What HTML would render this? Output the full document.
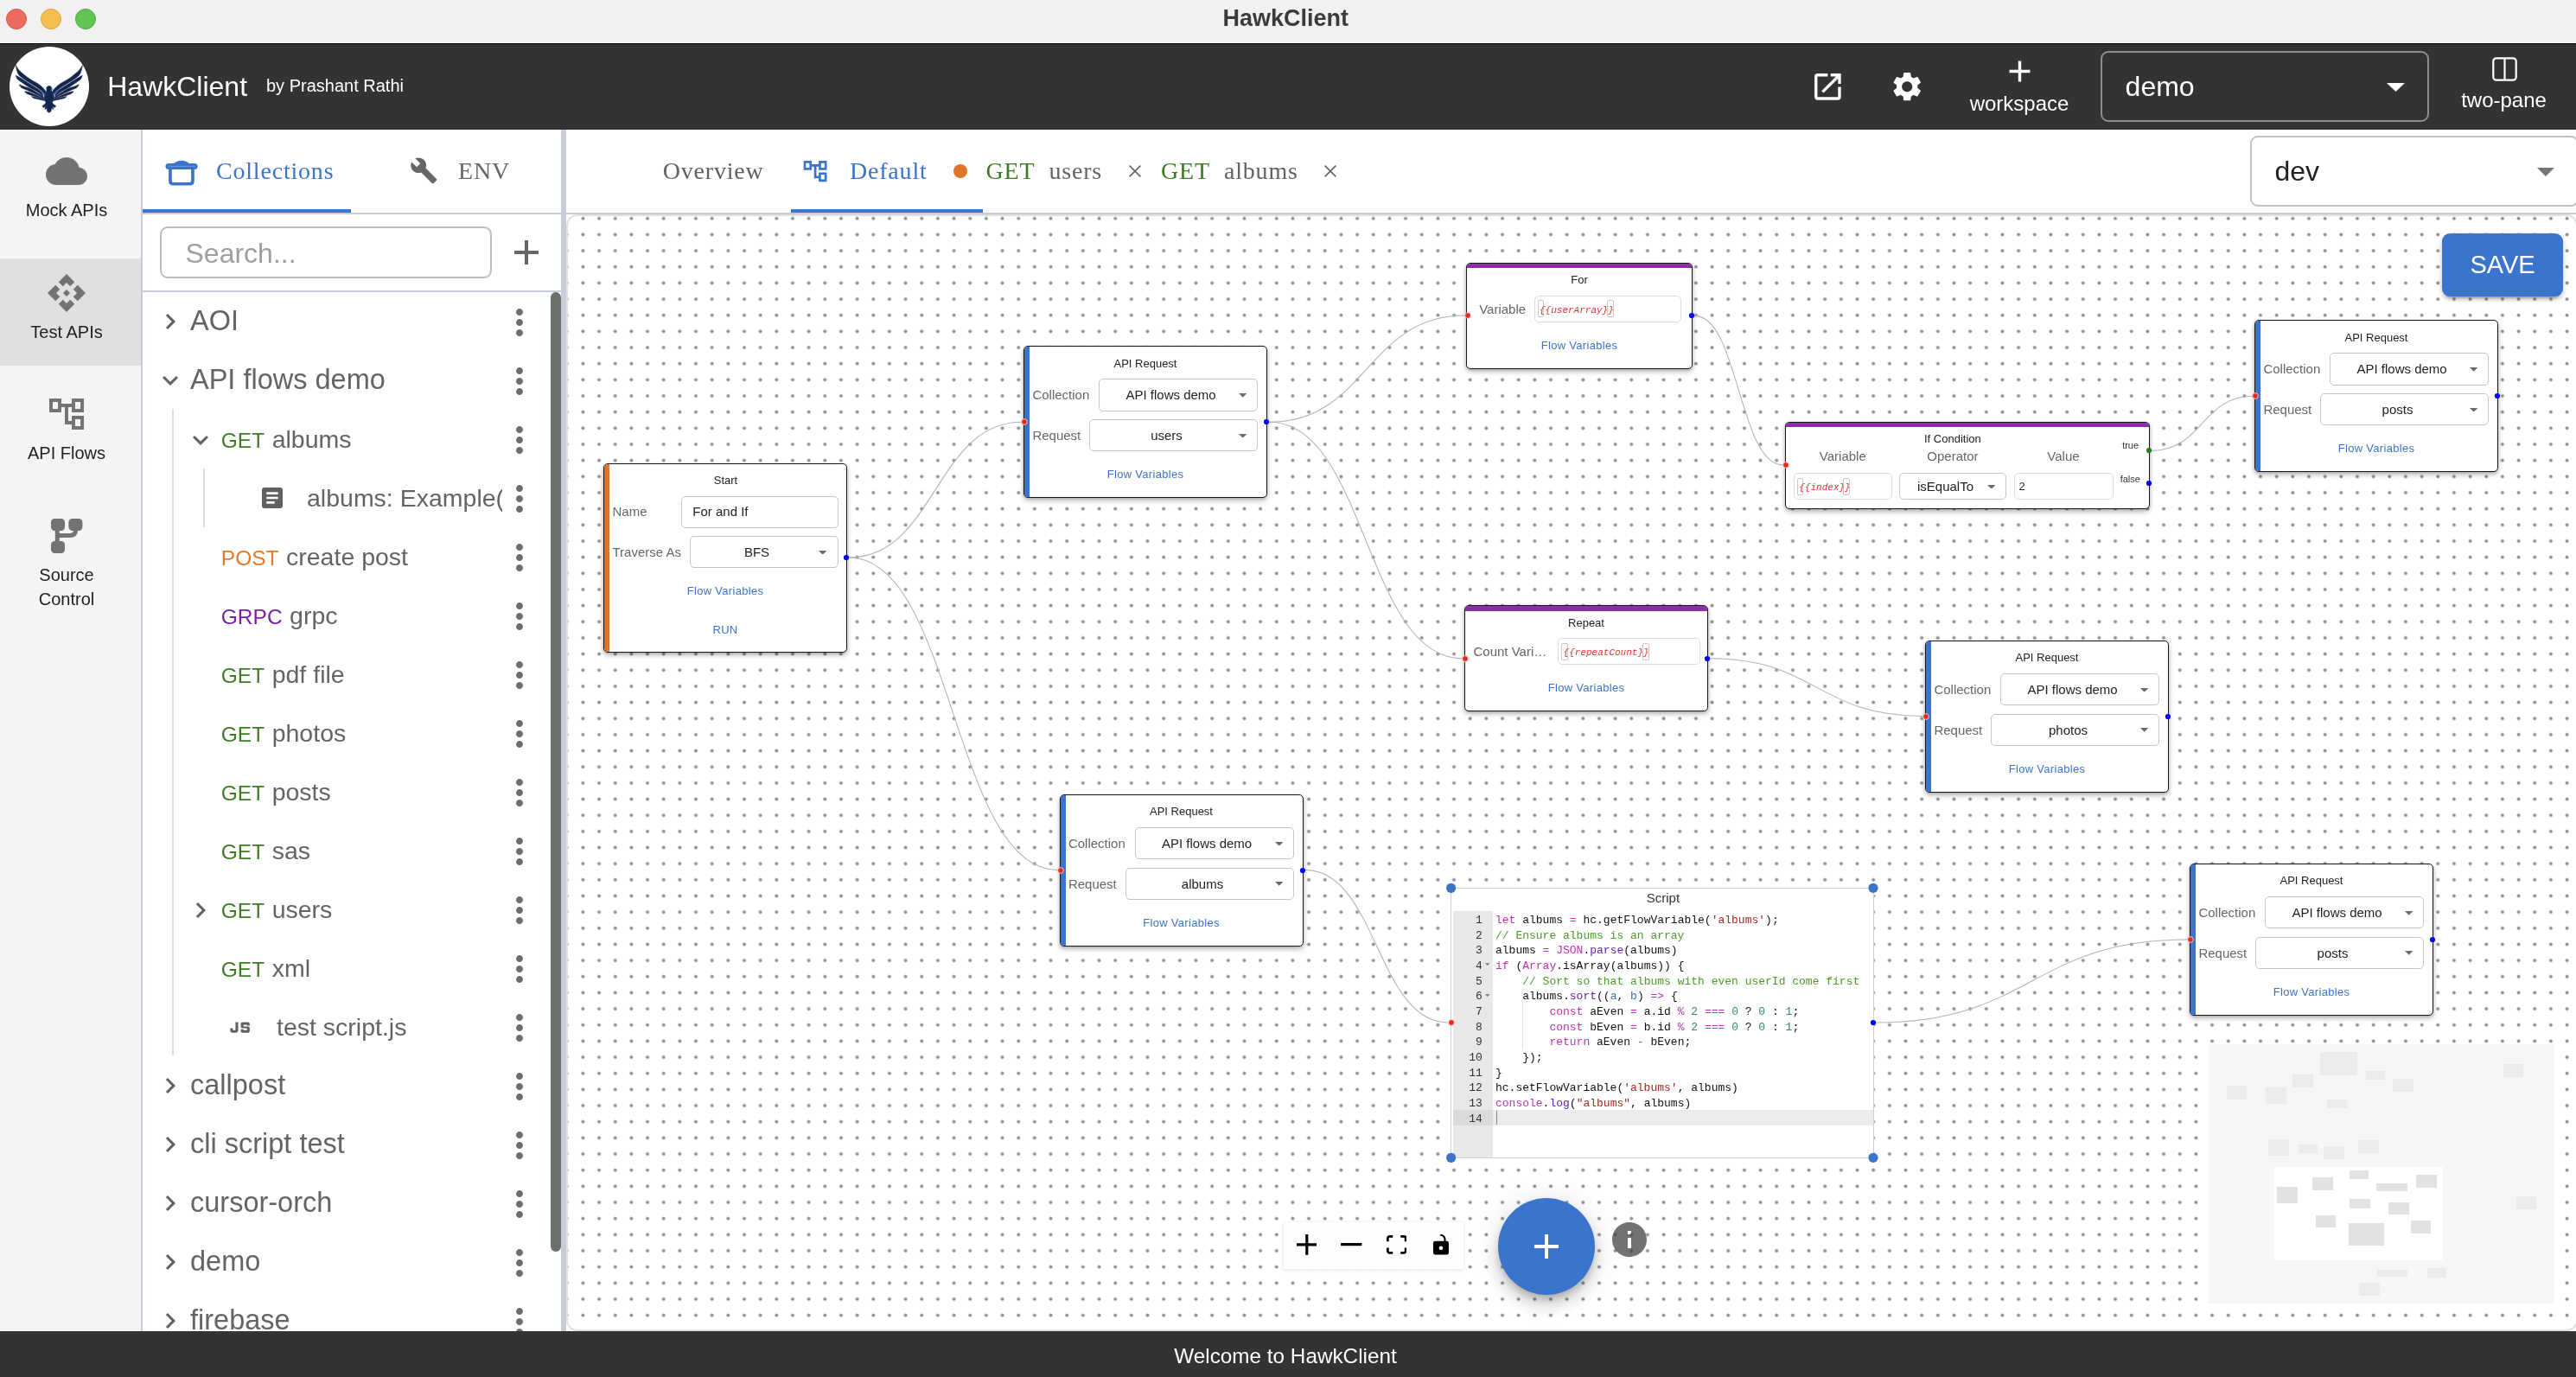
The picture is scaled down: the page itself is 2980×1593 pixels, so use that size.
<!DOCTYPE html><html><head><meta charset="utf-8"><title>HawkClient</title><style>
html,body{margin:0;padding:0;overflow:hidden}body{width:2980px;height:1593px;overflow:hidden;position:relative;background:#fff;font-family:"Liberation Sans",sans-serif;}
.n{position:absolute;box-sizing:border-box;background:#fff;border:1px solid #181818;border-radius:5px;box-shadow:0 3px 6px rgba(0,0,0,.27),0 1px 3px rgba(0,0,0,.16);overflow:hidden}
.n>*{margin-left:-1px;margin-top:-1px}
.sel{position:absolute;box-sizing:border-box;border:1px solid #c4c4c4;border-radius:5px;background:#fff}
.inp{position:absolute;box-sizing:border-box;border:1px solid #dcdcdc;border-radius:5px;background:#fff}
.h{position:absolute;width:7px;height:7px;border-radius:50%;box-sizing:border-box}
</style></head><body><div style="position:absolute;left:0;top:0;width:2980px;height:1593px;overflow:hidden;will-change:transform">
<div style="position:absolute;left:0.00px;top:0.00px;width:2980.00px;height:50.00px;box-sizing:border-box;background:#f1f1ef;border-bottom:1px solid #fff;"></div>
<div style="position:absolute;left:7.00px;top:9.70px;width:24.00px;height:24.00px;box-sizing:border-box;border-radius:50%;background:#ec6a5e;border:1px solid #d5524a;"></div>
<div style="position:absolute;left:47.00px;top:9.70px;width:24.00px;height:24.00px;box-sizing:border-box;border-radius:50%;background:#f4bf4f;border:1px solid #d9a13a;"></div>
<div style="position:absolute;left:87.00px;top:9.70px;width:24.00px;height:24.00px;box-sizing:border-box;border-radius:50%;background:#61c554;border:1px solid #4ca63f;"></div>
<div style="position:absolute;top:8.34px;font-size:27px;line-height:27px;color:#3b3b3b;white-space:nowrap;left:1487.20px;transform:translateX(-50%);font-weight:bold;">HawkClient</div>
<div style="position:absolute;left:0.00px;top:50.00px;width:2980.00px;height:100.00px;box-sizing:border-box;background:#333;border-top:1px solid #000;"></div>
<div style="position:absolute;left:11.20px;top:53.80px;width:92.00px;height:92.00px;box-sizing:border-box;border-radius:50%;background:#fff;"></div>
<svg style="position:absolute;left:11.2px;top:53.8px" width="92" height="92" viewBox="0 0 92 92">
<defs><g id="hw"><path d="M7.30 21.60C8.08 22.70 9.40 25.65 12.00 28.20C14.60 30.75 19.27 34.37 22.90 36.90C26.53 39.43 31.12 41.55 33.80 43.40C36.48 45.25 37.53 46.47 39.00 48.00C40.47 49.53 42.00 51.83 42.60 52.60L39.40 54.80C38.47 53.75 36.55 50.70 33.80 48.50C31.05 46.30 26.53 44.02 22.90 41.60C19.27 39.18 14.38 36.27 12.00 34.00C9.62 31.73 9.38 30.07 8.60 28.00C7.82 25.93 7.52 22.67 7.30 21.60Z"/><path d="M7.30 33.30C8.08 33.72 9.40 34.23 12.00 35.80C14.60 37.37 19.27 40.40 22.90 42.70C26.53 45.00 31.13 47.45 33.80 49.60C36.47 51.75 38.05 54.60 38.90 55.60L38.60 57.60C37.80 56.87 36.42 54.95 33.80 53.20C31.18 51.45 26.53 49.33 22.90 47.10C19.27 44.87 14.35 41.48 12.00 39.80C9.65 38.12 9.58 38.08 8.80 37.00C8.02 35.92 7.55 33.92 7.30 33.30Z"/><path d="M11.30 43.80C12.08 44.13 14.07 45.08 16.00 45.80C17.93 46.52 19.93 46.68 22.90 48.10C25.87 49.52 31.05 52.60 33.80 54.30C36.55 56.00 38.47 57.63 39.40 58.30L39.30 59.70C38.38 59.17 36.53 57.88 33.80 56.50C31.07 55.12 26.20 52.90 22.90 51.40C19.60 49.90 15.93 48.77 14.00 47.50C12.07 46.23 11.75 44.42 11.30 43.80Z"/><path d="M17.40 51.80C18.32 51.95 20.17 51.80 22.90 52.70C25.63 53.60 30.95 55.97 33.80 57.20C36.65 58.43 38.97 59.62 40.00 60.10L39.90 61.10C38.88 60.73 36.63 59.85 33.80 58.90C30.97 57.95 25.20 56.17 22.90 55.40C20.60 54.63 20.92 54.90 20.00 54.30C19.08 53.70 17.83 52.22 17.40 51.80Z"/><path d="M25.40 57.60C26.00 57.70 27.60 57.88 29.00 58.20C30.40 58.52 31.90 58.95 33.80 59.50C35.70 60.05 39.30 61.17 40.40 61.50L40.30 62.40C39.22 62.15 35.77 61.33 33.80 60.90C31.83 60.47 29.90 60.35 28.50 59.80C27.10 59.25 25.92 57.97 25.40 57.60Z"/></g></defs>
<g fill="#15264d" stroke="#15264d" stroke-width="0.55" stroke-linejoin="round"><use href="#hw"/><use href="#hw" transform="translate(91.6,0) scale(-1,1)"/>
<path d="M45.8 45.4 C43.6 45.4 42.6 47 42.9 49.2 C43.1 51 42.8 52 42 53 L40.2 55 L40.2 61 L42.1 64.6 L41 66.4 L37.8 68.7 L39.5 70.6 L41.8 68.8 L40.8 72.6 L43.1 71.3 L43.7 75 L45.8 76.3 L47.9 75 L48.5 71.3 L50.8 72.6 L49.8 68.8 L52.1 70.6 L53.8 68.7 L50.6 66.4 L49.5 64.6 L51.4 61 L51.4 55 L49.6 53 C48.8 52 48.5 51 48.7 49.2 C49 47 48 45.4 45.8 45.4Z"/></g>
<path d="M48.3 47.3 L50.7 49.6 L48.6 49.9Z" fill="#3f8fe0"/>
<path d="M36.2 49.8 L42 56.4 M55.4 49.8 L49.6 56.4" stroke="#2f6fc0" stroke-width="1" fill="none"/>
</svg>
<div style="position:absolute;top:83.91px;font-size:32px;line-height:32px;color:#fff;white-space:nowrap;left:124.20px;">HawkClient</div>
<div style="position:absolute;top:89.07px;font-size:20px;line-height:20px;color:#fff;white-space:nowrap;left:308.00px;">by Prashant Rathi</div>
<svg style="position:absolute;left:2093.60px;top:79.60px;" width="40.8" height="40.8" viewBox="0 0 24 24"><path fill="#fff" d="M19 19H5V5h7V3H5c-1.11 0-2 .9-2 2v14c0 1.1.89 2 2 2h14c1.1 0 2-.9 2-2v-7h-2v7zM14 3v2h3.59l-9.83 9.83 1.41 1.41L19 6.41V10h2V3h-7z"/></svg>
<svg style="position:absolute;left:2185.80px;top:79.50px;" width="40.4" height="40.4" viewBox="0 0 24 24"><path fill="#fff" d="M19.14 12.94c.04-.3.06-.61.06-.94 0-.32-.02-.64-.07-.94l2.03-1.58c.18-.14.23-.41.12-.61l-1.92-3.32c-.12-.22-.37-.29-.59-.22l-2.39.96c-.5-.38-1.03-.7-1.62-.94l-.36-2.54c-.04-.24-.24-.41-.48-.41h-3.84c-.24 0-.43.17-.47.41l-.36 2.54c-.59.24-1.13.57-1.62.94l-2.39-.96c-.22-.08-.47 0-.59.22L2.74 8.87c-.12.21-.08.47.12.61l2.03 1.58c-.05.3-.09.63-.09.94s.02.64.07.94l-2.03 1.58c-.18.14-.23.41-.12.61l1.92 3.32c.12.22.37.29.59.22l2.39-.96c.5.38 1.03.7 1.62.94l.36 2.54c.05.24.24.41.48.41h3.84c.24 0 .44-.17.47-.41l.36-2.54c.59-.24 1.13-.56 1.62-.94l2.39.96c.22.08.47 0 .59-.22l1.92-3.32c.12-.22.07-.47-.12-.61l-2.01-1.58zM12 15.6c-1.98 0-3.6-1.62-3.6-3.6s1.62-3.6 3.6-3.6 3.6 1.62 3.6 3.6-1.62 3.6-3.6 3.6z"/></svg>
<svg style="position:absolute;left:2315.50px;top:61.50px;" width="41" height="41" viewBox="0 0 24 24"><path fill="#fff" d="M19 13h-6v6h-2v-6H5v-2h6V5h2v6h6v2z"/></svg>
<div style="position:absolute;top:107.88px;font-size:24px;line-height:24px;color:#fff;white-space:nowrap;left:2336.00px;transform:translateX(-50%);">workspace</div>
<div style="position:absolute;left:2430.00px;top:59.00px;width:380.00px;height:81.50px;box-sizing:border-box;border:2px solid #8e8e8e;border-radius:9px;"></div>
<div style="position:absolute;top:84.41px;font-size:32px;line-height:32px;color:#fff;white-space:nowrap;left:2458.60px;">demo</div>
<svg style="position:absolute;left:2761px;top:96px" width="21" height="10" viewBox="0 0 21 10"><path d="M0 0H21L10.5 10Z" fill="#fff"/></svg>
<svg style="position:absolute;left:2882.6px;top:66px" width="29" height="28" viewBox="0 0 29 28"><rect x="1.3" y="1.3" width="26.4" height="25.4" rx="3.6" fill="none" stroke="#fff" stroke-width="2.2"/><path d="M14.5 1.5V26.5" stroke="#fff" stroke-width="2.2"/></svg>
<div style="position:absolute;top:103.68px;font-size:24px;line-height:24px;color:#fff;white-space:nowrap;left:2896.50px;transform:translateX(-50%);">two-pane</div>
<div style="position:absolute;left:0.00px;top:150.00px;width:163.00px;height:1390.00px;box-sizing:border-box;background:#f4f4f4;"></div>
<div style="position:absolute;left:163.00px;top:150.00px;width:2.00px;height:1390.00px;box-sizing:border-box;background:#c5cbd9;"></div>
<div style="position:absolute;left:0.00px;top:299.30px;width:163.00px;height:123.60px;box-sizing:border-box;background:#e0e0e0;"></div>
<svg style="position:absolute;left:53.00px;top:174.00px;" width="48" height="48" viewBox="0 0 24 24"><path fill="#737373" d="M19.35 10.04C18.67 6.59 15.64 4 12 4 9.11 4 6.6 5.64 5.35 8.04 2.34 8.36 0 10.91 0 14c0 3.31 2.69 6 6 6h13c2.76 0 5-2.24 5-5 0-2.64-2.05-4.78-4.65-4.96z"/></svg>
<div style="position:absolute;top:232.87px;font-size:20px;line-height:20px;color:#222;white-space:nowrap;left:77.00px;transform:translateX(-50%);">Mock APIs</div>
<svg style="position:absolute;left:53.00px;top:315.00px;" width="48" height="48" viewBox="0 0 24 24"><path fill="#737373" d="M14 12l-2 2-2-2 2-2 2 2zm-2-6l2.12 2.12 2.5-2.5L12 1 7.38 5.62l2.5 2.5L12 6zm-6 6l2.12-2.12-2.5-2.5L1 12l4.62 4.62 2.5-2.5L6 12zm12 0l-2.12 2.12 2.5 2.5L23 12l-4.62-4.62-2.5 2.5L18 12zm-6 6l-2.12-2.12-2.5 2.5L12 23l4.62-4.62-2.5-2.5L12 18z"/></svg>
<div style="position:absolute;top:373.87px;font-size:20px;line-height:20px;color:#222;white-space:nowrap;left:77.00px;transform:translateX(-50%);">Test APIs</div>
<svg style="position:absolute;left:52.60px;top:455.00px;" width="48" height="48" viewBox="0 0 24 24"><path fill="#737373" d="M22 11V3h-7v3H9V3H2v8h7V8h2v10h4v3h7v-8h-7v3h-2V8h2v3h7zM7 9H4V5h3v4zm10 6h3v4h-3v-4zm0-10h3v4h-3V5z"/></svg>
<div style="position:absolute;top:513.87px;font-size:20px;line-height:20px;color:#222;white-space:nowrap;left:77.00px;transform:translateX(-50%);">API Flows</div>
<svg style="position:absolute;left:53px;top:597px" width="48" height="48" viewBox="0 0 48 48">
<g fill="#737373"><rect x="6" y="3" width="16" height="14" rx="4.2"/><rect x="26.4" y="3" width="16" height="14" rx="4.2"/><rect x="6" y="29" width="16" height="14" rx="4.2"/></g>
<path d="M13.25 16V30M13.25 22.5H27.5Q34.5 22.5 34.5 16" fill="none" stroke="#737373" stroke-width="5"/></svg>
<div style="position:absolute;top:655.27px;font-size:20px;line-height:20px;color:#222;white-space:nowrap;left:77.00px;transform:translateX(-50%);">Source</div>
<div style="position:absolute;top:682.97px;font-size:20px;line-height:20px;color:#222;white-space:nowrap;left:77.00px;transform:translateX(-50%);">Control</div>
<div style="position:absolute;left:165.00px;top:246.00px;width:484.00px;height:2.00px;box-sizing:border-box;background:#c5cbd9;"></div>
<div style="position:absolute;left:165.00px;top:242.00px;width:241.00px;height:4.00px;box-sizing:border-box;background:#3b74cc;"></div>
<svg style="position:absolute;left:190px;top:184px" width="40" height="34" viewBox="0 0 40 34">
<rect x="1.5" y="4.9" width="37.1" height="7.2" rx="3.6" fill="#3b74cc"/>
<path d="M11 5.5 C15 0.6 25 0.6 29 5.5Z" fill="#3b74cc"/>
<path d="M6.95 11 V25.25 Q6.95 28.75 10.45 28.75 H29.45 Q32.95 28.75 32.95 25.25 V11" fill="none" stroke="#3b74cc" stroke-width="3.7"/>
<path d="M4.5 8.4H35.5" stroke="#7fa6e2" stroke-width="0.6"/></svg>
<div style="position:absolute;top:183.55px;font-size:28px;line-height:28px;color:#3b74cc;white-space:nowrap;font-family:'Liberation Serif',serif;left:250.00px;letter-spacing:0.8px;">Collections</div>
<svg style="position:absolute;left:473.80px;top:181.40px;" width="32.7" height="32.7" viewBox="0 0 24 24"><path fill="#666" d="M22.7 19l-9.1-9.1c.9-2.3.4-5-1.5-6.9-2-2-5-2.4-7.4-1.3L9 6 6 9 1.6 4.7C.4 7.1.9 10.1 2.9 12.1c1.9 1.9 4.6 2.4 6.9 1.5l9.1 9.1c.4.4 1 .4 1.4 0l2.3-2.3c.5-.4.5-1.1.1-1.4z"/></svg>
<div style="position:absolute;top:183.55px;font-size:28px;line-height:28px;color:#666;white-space:nowrap;font-family:'Liberation Serif',serif;left:530.00px;letter-spacing:0.8px;">ENV</div>
<div style="position:absolute;left:185.00px;top:262.40px;width:384.00px;height:59.20px;box-sizing:border-box;border:2px solid #bdbdbd;border-radius:9px;"></div>
<div style="position:absolute;top:276.61px;font-size:32px;line-height:32px;color:#9e9e9e;white-space:nowrap;left:214.50px;">Search...</div>
<svg style="position:absolute;left:585.00px;top:268.00px;" width="48" height="48" viewBox="0 0 24 24"><path fill="#666" d="M19 13h-6v6h-2v-6H5v-2h6V5h2v6h6v2z"/></svg>
<div style="position:absolute;left:165.00px;top:336.00px;width:484.00px;height:2.00px;box-sizing:border-box;background:#c5cbd9;"></div>
<div style="position:absolute;left:165px;top:338px;width:484px;height:1202px;overflow:hidden">
<svg style="position:absolute;left:13.50px;top:15.60px;" width="36" height="36" viewBox="0 0 24 24"><path fill="#616161" d="M10 6L8.59 7.41 13.17 12l-4.58 4.59L10 18l6-6z"/></svg>
<div style="position:absolute;top:17.09px;font-size:32.5px;line-height:32.5px;color:#646464;white-space:nowrap;left:55.00px;">AOI</div>
<svg style="position:absolute;left:412.30px;top:11.00px;" width="48" height="48" viewBox="0 0 24 24"><path fill="#6e6e6e" d="M12 8c1.1 0 2-.9 2-2s-.9-2-2-2-2 .9-2 2 .9 2 2 2zm0 2c-1.1 0-2 .9-2 2s.9 2 2 2 2-.9 2-2-.9-2-2-2zm0 6c-1.1 0-2 .9-2 2s.9 2 2 2 2-.9 2-2-.9-2-2-2z"/></svg>
<svg style="position:absolute;left:13.50px;top:83.60px;" width="36" height="36" viewBox="0 0 24 24"><path fill="#616161" d="M16.59 8.59L12 13.17 7.41 8.59 6 10l6 6 6-6z"/></svg>
<div style="position:absolute;top:85.09px;font-size:32.5px;line-height:32.5px;color:#646464;white-space:nowrap;left:55.00px;">API flows demo</div>
<svg style="position:absolute;left:412.30px;top:79.00px;" width="48" height="48" viewBox="0 0 24 24"><path fill="#6e6e6e" d="M12 8c1.1 0 2-.9 2-2s-.9-2-2-2-2 .9-2 2 .9 2 2 2zm0 2c-1.1 0-2 .9-2 2s.9 2 2 2 2-.9 2-2-.9-2-2-2zm0 6c-1.1 0-2 .9-2 2s.9 2 2 2 2-.9 2-2-.9-2-2-2z"/></svg>
<svg style="position:absolute;left:49.00px;top:153.00px;" width="36" height="36" viewBox="0 0 24 24"><path fill="#616161" d="M16.59 8.59L12 13.17 7.41 8.59 6 10l6 6 6-6z"/></svg>
<div style="position:absolute;top:155.87px;font-size:28.5px;line-height:28.5px;color:#646464;white-space:nowrap;left:90.80px;"><span style="font-size:24.5px;color:#3b7d23">GET</span><span style="margin-left:8.5px">albums</span></div>
<svg style="position:absolute;left:412.30px;top:147.00px;" width="48" height="48" viewBox="0 0 24 24"><path fill="#6e6e6e" d="M12 8c1.1 0 2-.9 2-2s-.9-2-2-2-2 .9-2 2 .9 2 2 2zm0 2c-1.1 0-2 .9-2 2s.9 2 2 2 2-.9 2-2-.9-2-2-2zm0 6c-1.1 0-2 .9-2 2s.9 2 2 2 2-.9 2-2-.9-2-2-2z"/></svg>
<svg style="position:absolute;left:134.00px;top:222.00px;" width="32" height="32" viewBox="0 0 24 24"><path fill="#616161" d="M19 3H5c-1.1 0-2 .9-2 2v14c0 1.1.9 2 2 2h14c1.1 0 2-.9 2-2V5c0-1.1-.9-2-2-2zm-5 14H7v-2h7v2zm3-4H7v-2h10v2zm0-4H7V7h10v2z"/></svg>
<div style="position:absolute;left:190px;top:223.87px;width:225.6px;overflow:hidden;font-size:28.5px;line-height:28.5px;height:35px;color:#646464;white-space:nowrap">albums: Example(</div>
<svg style="position:absolute;left:412.30px;top:215.00px;" width="48" height="48" viewBox="0 0 24 24"><path fill="#6e6e6e" d="M12 8c1.1 0 2-.9 2-2s-.9-2-2-2-2 .9-2 2 .9 2 2 2zm0 2c-1.1 0-2 .9-2 2s.9 2 2 2 2-.9 2-2-.9-2-2-2zm0 6c-1.1 0-2 .9-2 2s.9 2 2 2 2-.9 2-2-.9-2-2-2z"/></svg>
<div style="position:absolute;top:291.87px;font-size:28.5px;line-height:28.5px;color:#646464;white-space:nowrap;left:90.80px;"><span style="font-size:24.5px;color:#e07b2d">POST</span><span style="margin-left:8.5px">create post</span></div>
<svg style="position:absolute;left:412.30px;top:283.00px;" width="48" height="48" viewBox="0 0 24 24"><path fill="#6e6e6e" d="M12 8c1.1 0 2-.9 2-2s-.9-2-2-2-2 .9-2 2 .9 2 2 2zm0 2c-1.1 0-2 .9-2 2s.9 2 2 2 2-.9 2-2-.9-2-2-2zm0 6c-1.1 0-2 .9-2 2s.9 2 2 2 2-.9 2-2-.9-2-2-2z"/></svg>
<div style="position:absolute;top:359.87px;font-size:28.5px;line-height:28.5px;color:#646464;white-space:nowrap;left:90.80px;"><span style="font-size:24.5px;color:#7b1fa2">GRPC</span><span style="margin-left:8.5px">grpc</span></div>
<svg style="position:absolute;left:412.30px;top:351.00px;" width="48" height="48" viewBox="0 0 24 24"><path fill="#6e6e6e" d="M12 8c1.1 0 2-.9 2-2s-.9-2-2-2-2 .9-2 2 .9 2 2 2zm0 2c-1.1 0-2 .9-2 2s.9 2 2 2 2-.9 2-2-.9-2-2-2zm0 6c-1.1 0-2 .9-2 2s.9 2 2 2 2-.9 2-2-.9-2-2-2z"/></svg>
<div style="position:absolute;top:427.87px;font-size:28.5px;line-height:28.5px;color:#646464;white-space:nowrap;left:90.80px;"><span style="font-size:24.5px;color:#3b7d23">GET</span><span style="margin-left:8.5px">pdf file</span></div>
<svg style="position:absolute;left:412.30px;top:419.00px;" width="48" height="48" viewBox="0 0 24 24"><path fill="#6e6e6e" d="M12 8c1.1 0 2-.9 2-2s-.9-2-2-2-2 .9-2 2 .9 2 2 2zm0 2c-1.1 0-2 .9-2 2s.9 2 2 2 2-.9 2-2-.9-2-2-2zm0 6c-1.1 0-2 .9-2 2s.9 2 2 2 2-.9 2-2-.9-2-2-2z"/></svg>
<div style="position:absolute;top:495.87px;font-size:28.5px;line-height:28.5px;color:#646464;white-space:nowrap;left:90.80px;"><span style="font-size:24.5px;color:#3b7d23">GET</span><span style="margin-left:8.5px">photos</span></div>
<svg style="position:absolute;left:412.30px;top:487.00px;" width="48" height="48" viewBox="0 0 24 24"><path fill="#6e6e6e" d="M12 8c1.1 0 2-.9 2-2s-.9-2-2-2-2 .9-2 2 .9 2 2 2zm0 2c-1.1 0-2 .9-2 2s.9 2 2 2 2-.9 2-2-.9-2-2-2zm0 6c-1.1 0-2 .9-2 2s.9 2 2 2 2-.9 2-2-.9-2-2-2z"/></svg>
<div style="position:absolute;top:563.87px;font-size:28.5px;line-height:28.5px;color:#646464;white-space:nowrap;left:90.80px;"><span style="font-size:24.5px;color:#3b7d23">GET</span><span style="margin-left:8.5px">posts</span></div>
<svg style="position:absolute;left:412.30px;top:555.00px;" width="48" height="48" viewBox="0 0 24 24"><path fill="#6e6e6e" d="M12 8c1.1 0 2-.9 2-2s-.9-2-2-2-2 .9-2 2 .9 2 2 2zm0 2c-1.1 0-2 .9-2 2s.9 2 2 2 2-.9 2-2-.9-2-2-2zm0 6c-1.1 0-2 .9-2 2s.9 2 2 2 2-.9 2-2-.9-2-2-2z"/></svg>
<div style="position:absolute;top:631.87px;font-size:28.5px;line-height:28.5px;color:#646464;white-space:nowrap;left:90.80px;"><span style="font-size:24.5px;color:#3b7d23">GET</span><span style="margin-left:8.5px">sas</span></div>
<svg style="position:absolute;left:412.30px;top:623.00px;" width="48" height="48" viewBox="0 0 24 24"><path fill="#6e6e6e" d="M12 8c1.1 0 2-.9 2-2s-.9-2-2-2-2 .9-2 2 .9 2 2 2zm0 2c-1.1 0-2 .9-2 2s.9 2 2 2 2-.9 2-2-.9-2-2-2zm0 6c-1.1 0-2 .9-2 2s.9 2 2 2 2-.9 2-2-.9-2-2-2z"/></svg>
<svg style="position:absolute;left:49.00px;top:697.00px;" width="36" height="36" viewBox="0 0 24 24"><path fill="#616161" d="M10 6L8.59 7.41 13.17 12l-4.58 4.59L10 18l6-6z"/></svg>
<div style="position:absolute;top:699.87px;font-size:28.5px;line-height:28.5px;color:#646464;white-space:nowrap;left:90.80px;"><span style="font-size:24.5px;color:#3b7d23">GET</span><span style="margin-left:8.5px">users</span></div>
<svg style="position:absolute;left:412.30px;top:691.00px;" width="48" height="48" viewBox="0 0 24 24"><path fill="#6e6e6e" d="M12 8c1.1 0 2-.9 2-2s-.9-2-2-2-2 .9-2 2 .9 2 2 2zm0 2c-1.1 0-2 .9-2 2s.9 2 2 2 2-.9 2-2-.9-2-2-2zm0 6c-1.1 0-2 .9-2 2s.9 2 2 2 2-.9 2-2-.9-2-2-2z"/></svg>
<div style="position:absolute;top:767.87px;font-size:28.5px;line-height:28.5px;color:#646464;white-space:nowrap;left:90.80px;"><span style="font-size:24.5px;color:#3b7d23">GET</span><span style="margin-left:8.5px">xml</span></div>
<svg style="position:absolute;left:412.30px;top:759.00px;" width="48" height="48" viewBox="0 0 24 24"><path fill="#6e6e6e" d="M12 8c1.1 0 2-.9 2-2s-.9-2-2-2-2 .9-2 2 .9 2 2 2zm0 2c-1.1 0-2 .9-2 2s.9 2 2 2 2-.9 2-2-.9-2-2-2zm0 6c-1.1 0-2 .9-2 2s.9 2 2 2 2-.9 2-2-.9-2-2-2z"/></svg>
<svg style="position:absolute;left:89.40px;top:826.40px;" width="49.2" height="49.2" viewBox="0 0 24 24"><path fill="#616161" d="M12 14v-1h1.5v.5h2v-1H13c-.55 0-1-.45-1-1V10c0-.55.45-1 1-1h3c.55 0 1 .45 1 1v1h-1.5v-.5h-2v1H16c.55 0 1 .45 1 1V14c0 .55-.45 1-1 1h-3c-.55 0-1-.45-1-1zM9 9v4.5H7.5v-1H6v1c0 .83.67 1.5 1.5 1.5H9c.83 0 1.5-.67 1.5-1.5V9H9z"/></svg>
<div style="position:absolute;top:835.87px;font-size:28.5px;line-height:28.5px;color:#646464;white-space:nowrap;left:155.00px;">test script.js</div>
<svg style="position:absolute;left:412.30px;top:827.00px;" width="48" height="48" viewBox="0 0 24 24"><path fill="#6e6e6e" d="M12 8c1.1 0 2-.9 2-2s-.9-2-2-2-2 .9-2 2 .9 2 2 2zm0 2c-1.1 0-2 .9-2 2s.9 2 2 2 2-.9 2-2-.9-2-2-2zm0 6c-1.1 0-2 .9-2 2s.9 2 2 2 2-.9 2-2-.9-2-2-2z"/></svg>
<svg style="position:absolute;left:13.50px;top:899.60px;" width="36" height="36" viewBox="0 0 24 24"><path fill="#616161" d="M10 6L8.59 7.41 13.17 12l-4.58 4.59L10 18l6-6z"/></svg>
<div style="position:absolute;top:901.09px;font-size:32.5px;line-height:32.5px;color:#646464;white-space:nowrap;left:55.00px;">callpost</div>
<svg style="position:absolute;left:412.30px;top:895.00px;" width="48" height="48" viewBox="0 0 24 24"><path fill="#6e6e6e" d="M12 8c1.1 0 2-.9 2-2s-.9-2-2-2-2 .9-2 2 .9 2 2 2zm0 2c-1.1 0-2 .9-2 2s.9 2 2 2 2-.9 2-2-.9-2-2-2zm0 6c-1.1 0-2 .9-2 2s.9 2 2 2 2-.9 2-2-.9-2-2-2z"/></svg>
<svg style="position:absolute;left:13.50px;top:967.60px;" width="36" height="36" viewBox="0 0 24 24"><path fill="#616161" d="M10 6L8.59 7.41 13.17 12l-4.58 4.59L10 18l6-6z"/></svg>
<div style="position:absolute;top:969.09px;font-size:32.5px;line-height:32.5px;color:#646464;white-space:nowrap;left:55.00px;">cli script test</div>
<svg style="position:absolute;left:412.30px;top:963.00px;" width="48" height="48" viewBox="0 0 24 24"><path fill="#6e6e6e" d="M12 8c1.1 0 2-.9 2-2s-.9-2-2-2-2 .9-2 2 .9 2 2 2zm0 2c-1.1 0-2 .9-2 2s.9 2 2 2 2-.9 2-2-.9-2-2-2zm0 6c-1.1 0-2 .9-2 2s.9 2 2 2 2-.9 2-2-.9-2-2-2z"/></svg>
<svg style="position:absolute;left:13.50px;top:1035.60px;" width="36" height="36" viewBox="0 0 24 24"><path fill="#616161" d="M10 6L8.59 7.41 13.17 12l-4.58 4.59L10 18l6-6z"/></svg>
<div style="position:absolute;top:1037.09px;font-size:32.5px;line-height:32.5px;color:#646464;white-space:nowrap;left:55.00px;">cursor-orch</div>
<svg style="position:absolute;left:412.30px;top:1031.00px;" width="48" height="48" viewBox="0 0 24 24"><path fill="#6e6e6e" d="M12 8c1.1 0 2-.9 2-2s-.9-2-2-2-2 .9-2 2 .9 2 2 2zm0 2c-1.1 0-2 .9-2 2s.9 2 2 2 2-.9 2-2-.9-2-2-2zm0 6c-1.1 0-2 .9-2 2s.9 2 2 2 2-.9 2-2-.9-2-2-2z"/></svg>
<svg style="position:absolute;left:13.50px;top:1103.60px;" width="36" height="36" viewBox="0 0 24 24"><path fill="#616161" d="M10 6L8.59 7.41 13.17 12l-4.58 4.59L10 18l6-6z"/></svg>
<div style="position:absolute;top:1105.09px;font-size:32.5px;line-height:32.5px;color:#646464;white-space:nowrap;left:55.00px;">demo</div>
<svg style="position:absolute;left:412.30px;top:1099.00px;" width="48" height="48" viewBox="0 0 24 24"><path fill="#6e6e6e" d="M12 8c1.1 0 2-.9 2-2s-.9-2-2-2-2 .9-2 2 .9 2 2 2zm0 2c-1.1 0-2 .9-2 2s.9 2 2 2 2-.9 2-2-.9-2-2-2zm0 6c-1.1 0-2 .9-2 2s.9 2 2 2 2-.9 2-2-.9-2-2-2z"/></svg>
<svg style="position:absolute;left:13.50px;top:1171.60px;" width="36" height="36" viewBox="0 0 24 24"><path fill="#616161" d="M10 6L8.59 7.41 13.17 12l-4.58 4.59L10 18l6-6z"/></svg>
<div style="position:absolute;top:1173.09px;font-size:32.5px;line-height:32.5px;color:#646464;white-space:nowrap;left:55.00px;">firebase</div>
<svg style="position:absolute;left:412.30px;top:1167.00px;" width="48" height="48" viewBox="0 0 24 24"><path fill="#6e6e6e" d="M12 8c1.1 0 2-.9 2-2s-.9-2-2-2-2 .9-2 2 .9 2 2 2zm0 2c-1.1 0-2 .9-2 2s.9 2 2 2 2-.9 2-2-.9-2-2-2zm0 6c-1.1 0-2 .9-2 2s.9 2 2 2 2-.9 2-2-.9-2-2-2z"/></svg>
<div style="position:absolute;left:33.60px;top:135.40px;width:2.00px;height:748.10px;box-sizing:border-box;background:#dedede;"></div>
<div style="position:absolute;left:69.70px;top:204.00px;width:2.00px;height:67.70px;box-sizing:border-box;background:#dedede;"></div>
<div style="position:absolute;left:472.00px;top:0.00px;width:12.00px;height:1109.50px;box-sizing:border-box;background:#6b716b;border-radius:6px;"></div>
</div>
<div style="position:absolute;left:649.00px;top:150.00px;width:6.00px;height:1390.00px;box-sizing:border-box;background:#c8cdd9;"></div>
<div style="position:absolute;left:655.00px;top:246.00px;width:2325.00px;height:2.00px;box-sizing:border-box;background:#c5cbd9;"></div>
<div style="position:absolute;left:915.00px;top:242.00px;width:222.00px;height:4.00px;box-sizing:border-box;background:#3b74cc;"></div>
<div style="position:absolute;top:183.55px;font-size:28px;line-height:28px;color:#606060;white-space:nowrap;font-family:'Liberation Serif',serif;left:766.80px;letter-spacing:0.8px;">Overview</div>
<svg style="position:absolute;left:926.80px;top:181.90px;" width="32.2" height="32.2" viewBox="0 0 24 24"><path fill="#3b74cc" d="M22 11V3h-7v3H9V3H2v8h7V8h2v10h4v3h7v-8h-7v3h-2V8h2v3h7zM7 9H4V5h3v4zm10 6h3v4h-3v-4zm0-10h3v4h-3V5z"/></svg>
<div style="position:absolute;top:183.55px;font-size:28px;line-height:28px;color:#3b74cc;white-space:nowrap;font-family:'Liberation Serif',serif;left:983.00px;letter-spacing:0.8px;">Default</div>
<div style="position:absolute;left:1102.70px;top:189.80px;width:16.00px;height:16.00px;box-sizing:border-box;border-radius:50%;background:#e07429;"></div>
<div style="position:absolute;top:183.55px;font-size:28px;line-height:28px;color:#3b7d23;white-space:nowrap;font-family:'Liberation Serif',serif;left:1140.50px;letter-spacing:0.8px;">GET</div>
<div style="position:absolute;top:183.55px;font-size:28px;line-height:28px;color:#636363;white-space:nowrap;font-family:'Liberation Serif',serif;left:1213.50px;letter-spacing:0.8px;">users</div>
<div style="position:absolute;top:183.55px;font-size:28px;line-height:28px;color:#3b7d23;white-space:nowrap;font-family:'Liberation Serif',serif;left:1343.00px;letter-spacing:0.8px;">GET</div>
<div style="position:absolute;top:183.55px;font-size:28px;line-height:28px;color:#636363;white-space:nowrap;font-family:'Liberation Serif',serif;left:1416.00px;letter-spacing:0.8px;">albums</div>
<svg style="position:absolute;left:1305.3px;top:190px" width="16" height="16" viewBox="0 0 16 16"><path d="M1.6 1.6L14.4 14.4M14.4 1.6L1.6 14.4" stroke="#606060" stroke-width="1.5"/></svg>
<svg style="position:absolute;left:1531px;top:190px" width="16" height="16" viewBox="0 0 16 16"><path d="M1.6 1.6L14.4 14.4M14.4 1.6L1.6 14.4" stroke="#606060" stroke-width="1.5"/></svg>
<div style="position:absolute;left:2603.00px;top:157.00px;width:380.00px;height:81.50px;box-sizing:border-box;border:2px solid #c2c2c2;border-radius:9px;background:#fff;"></div>
<div style="position:absolute;top:182.41px;font-size:32px;line-height:32px;color:#222;white-space:nowrap;left:2631.40px;">dev</div>
<svg style="position:absolute;left:2935px;top:194px" width="20" height="10" viewBox="0 0 20 10"><path d="M0 0H20L10 10Z" fill="#757575"/></svg>
<div id="canvas" style="position:absolute;left:655px;top:248px;width:2327px;height:1292px;box-sizing:border-box;border:2px solid #e0e0e0;border-radius:13px;overflow:hidden;background:#fff">
<div style="position:absolute;left:-657px;top:-250px;width:2980px;height:1593px">
<svg style="position:absolute;left:0;top:0" width="2980" height="1593"><defs><pattern id="dots" x="665.07" y="243.42" width="18.66" height="18.66" patternUnits="userSpaceOnUse"><circle cx="9.33" cy="9.33" r="2.0" fill="#8f8f98"/></pattern></defs><rect x="650" y="240" width="2330" height="1310" fill="url(#dots)"/></svg>
<svg style="position:absolute;left:0;top:0" width="2980" height="1593" fill="none" stroke="#b1b1b7" stroke-width="1.05">
<path d="M982.0 645.0C1082.0 645.0 1082.0 488.3 1182.0 488.3"/>
<path d="M982.0 645.0C1102.8 645.0 1102.8 1006.5 1223.5 1006.5"/>
<path d="M1468.5 488.3C1581.2 488.3 1581.2 365.1 1694.0 365.1"/>
<path d="M1468.5 488.3C1580.0 488.3 1580.0 761.8 1691.5 761.8"/>
<path d="M1960.0 365.1C2011.5 365.1 2011.5 538.0 2063.0 538.0"/>
<path d="M2489.0 521.4C2547.5 521.4 2547.5 458.3 2606.0 458.3"/>
<path d="M1978.0 761.8C2101.5 761.8 2101.5 828.5 2225.0 828.5"/>
<path d="M1510.0 1006.5C1592.8 1006.5 1592.8 1183.0 1675.5 1183.0"/>
<path d="M2170.0 1183.0C2350.5 1183.0 2350.5 1087.0 2531.0 1087.0"/>
</svg>
<div class="n" style="left:698.0px;top:535.5px;width:282.0px;height:219.0px"><div style="position:absolute;left:0.00px;top:0.00px;width:7.00px;height:219.00px;box-sizing:border-box;background:#dd742d;"></div><div style="position:absolute;top:13.80px;font-size:13px;line-height:13px;color:#222;white-space:nowrap;left:141.50px;transform:translateX(-50%);">Start</div><div style="position:absolute;top:48.80px;font-size:15px;line-height:15px;color:#666;white-space:nowrap;left:10.50px;">Name</div><div class="sel" style="left:89.6px;top:38px;width:182.2px;height:37px"></div><div style="position:absolute;top:48.80px;font-size:15px;line-height:15px;color:#222;white-space:nowrap;left:103.30px;">For and If</div><div style="position:absolute;top:95.80px;font-size:15px;line-height:15px;color:#666;white-space:nowrap;left:10.50px;">Traverse As</div><div class="sel" style="left:100px;top:84.7px;width:171.8px;height:37.2px"></div><div style="position:absolute;top:95.80px;font-size:15px;line-height:15px;color:#222;white-space:nowrap;left:177.50px;transform:translateX(-50%);">BFS</div><svg style="position:absolute;left:249.4px;top:101.2px" width="9.4" height="4.8" viewBox="0 0 10 5"><path d="M0 0H10L5 5Z" fill="#6b6b6b"/></svg><div style="position:absolute;top:141.50px;font-size:13px;line-height:13px;color:#3b74cc;white-space:nowrap;left:141.00px;transform:translateX(-50%);letter-spacing:0.3px;">Flow Variables</div><div style="position:absolute;top:186.00px;font-size:13px;line-height:13px;color:#3b74cc;white-space:nowrap;left:141.00px;transform:translateX(-50%);letter-spacing:0.3px;">RUN</div></div><svg style="position:absolute;left:974.0px;top:639.9px" width="10" height="10" viewBox="0 0 10 10"><circle cx="5" cy="5" r="3.1" fill="#0000ff"/></svg>
<div class="n" style="left:1184.0px;top:400.0px;width:282.0px;height:176.0px"><div style="position:absolute;left:0.00px;top:0.00px;width:7.00px;height:176.00px;box-sizing:border-box;background:#3b74cc;"></div><div style="position:absolute;top:13.70px;font-size:13px;line-height:13px;color:#222;white-space:nowrap;left:141.00px;transform:translateX(-50%);">API Request</div><div style="position:absolute;top:49.30px;font-size:15px;line-height:15px;color:#666;white-space:nowrap;left:10.40px;">Collection</div><div class="sel" style="left:87px;top:38.4px;width:184.4px;height:37.2px"></div><div style="position:absolute;top:49.30px;font-size:15px;line-height:15px;color:#222;white-space:nowrap;left:170.60px;transform:translateX(-50%);">API flows demo</div><svg style="position:absolute;left:249.4px;top:55.1px" width="9.4" height="4.8" viewBox="0 0 10 5"><path d="M0 0H10L5 5Z" fill="#6b6b6b"/></svg><div style="position:absolute;top:96.10px;font-size:15px;line-height:15px;color:#666;white-space:nowrap;left:10.40px;">Request</div><div class="sel" style="left:76.3px;top:85.2px;width:195.1px;height:37px"></div><div style="position:absolute;top:96.10px;font-size:15px;line-height:15px;color:#222;white-space:nowrap;left:165.50px;transform:translateX(-50%);">users</div><svg style="position:absolute;left:249.4px;top:101.7px" width="9.4" height="4.8" viewBox="0 0 10 5"><path d="M0 0H10L5 5Z" fill="#6b6b6b"/></svg><div style="position:absolute;top:142.40px;font-size:13px;line-height:13px;color:#3b74cc;white-space:nowrap;left:141.00px;transform:translateX(-50%);letter-spacing:0.3px;">Flow Variables</div></div><svg style="position:absolute;left:1180.3px;top:483.2px" width="10" height="10" viewBox="0 0 10 10"><circle cx="5" cy="5" r="3.4" fill="#e8281c" stroke="#fff" stroke-width="0.7"/></svg><svg style="position:absolute;left:1460.2px;top:483.2px" width="10" height="10" viewBox="0 0 10 10"><circle cx="5" cy="5" r="3.1" fill="#0000ff"/></svg>
<div class="n" style="left:2608.0px;top:370.0px;width:282.0px;height:176.0px"><div style="position:absolute;left:0.00px;top:0.00px;width:7.00px;height:176.00px;box-sizing:border-box;background:#3b74cc;"></div><div style="position:absolute;top:13.70px;font-size:13px;line-height:13px;color:#222;white-space:nowrap;left:141.00px;transform:translateX(-50%);">API Request</div><div style="position:absolute;top:49.30px;font-size:15px;line-height:15px;color:#666;white-space:nowrap;left:10.40px;">Collection</div><div class="sel" style="left:87px;top:38.4px;width:184.4px;height:37.2px"></div><div style="position:absolute;top:49.30px;font-size:15px;line-height:15px;color:#222;white-space:nowrap;left:170.60px;transform:translateX(-50%);">API flows demo</div><svg style="position:absolute;left:249.4px;top:55.1px" width="9.4" height="4.8" viewBox="0 0 10 5"><path d="M0 0H10L5 5Z" fill="#6b6b6b"/></svg><div style="position:absolute;top:96.10px;font-size:15px;line-height:15px;color:#666;white-space:nowrap;left:10.40px;">Request</div><div class="sel" style="left:76.3px;top:85.2px;width:195.1px;height:37px"></div><div style="position:absolute;top:96.10px;font-size:15px;line-height:15px;color:#222;white-space:nowrap;left:165.50px;transform:translateX(-50%);">posts</div><svg style="position:absolute;left:249.4px;top:101.7px" width="9.4" height="4.8" viewBox="0 0 10 5"><path d="M0 0H10L5 5Z" fill="#6b6b6b"/></svg><div style="position:absolute;top:142.40px;font-size:13px;line-height:13px;color:#3b74cc;white-space:nowrap;left:141.00px;transform:translateX(-50%);letter-spacing:0.3px;">Flow Variables</div></div><svg style="position:absolute;left:2604.3px;top:453.2px" width="10" height="10" viewBox="0 0 10 10"><circle cx="5" cy="5" r="3.4" fill="#e8281c" stroke="#fff" stroke-width="0.7"/></svg><svg style="position:absolute;left:2884.2px;top:453.2px" width="10" height="10" viewBox="0 0 10 10"><circle cx="5" cy="5" r="3.1" fill="#0000ff"/></svg>
<div class="n" style="left:2227.0px;top:740.6px;width:282.0px;height:176.0px"><div style="position:absolute;left:0.00px;top:0.00px;width:7.00px;height:176.00px;box-sizing:border-box;background:#3b74cc;"></div><div style="position:absolute;top:13.70px;font-size:13px;line-height:13px;color:#222;white-space:nowrap;left:141.00px;transform:translateX(-50%);">API Request</div><div style="position:absolute;top:49.30px;font-size:15px;line-height:15px;color:#666;white-space:nowrap;left:10.40px;">Collection</div><div class="sel" style="left:87px;top:38.4px;width:184.4px;height:37.2px"></div><div style="position:absolute;top:49.30px;font-size:15px;line-height:15px;color:#222;white-space:nowrap;left:170.60px;transform:translateX(-50%);">API flows demo</div><svg style="position:absolute;left:249.4px;top:55.1px" width="9.4" height="4.8" viewBox="0 0 10 5"><path d="M0 0H10L5 5Z" fill="#6b6b6b"/></svg><div style="position:absolute;top:96.10px;font-size:15px;line-height:15px;color:#666;white-space:nowrap;left:10.40px;">Request</div><div class="sel" style="left:76.3px;top:85.2px;width:195.1px;height:37px"></div><div style="position:absolute;top:96.10px;font-size:15px;line-height:15px;color:#222;white-space:nowrap;left:165.50px;transform:translateX(-50%);">photos</div><svg style="position:absolute;left:249.4px;top:101.7px" width="9.4" height="4.8" viewBox="0 0 10 5"><path d="M0 0H10L5 5Z" fill="#6b6b6b"/></svg><div style="position:absolute;top:142.40px;font-size:13px;line-height:13px;color:#3b74cc;white-space:nowrap;left:141.00px;transform:translateX(-50%);letter-spacing:0.3px;">Flow Variables</div></div><svg style="position:absolute;left:2223.3px;top:823.8px" width="10" height="10" viewBox="0 0 10 10"><circle cx="5" cy="5" r="3.4" fill="#e8281c" stroke="#fff" stroke-width="0.7"/></svg><svg style="position:absolute;left:2503.2px;top:823.8px" width="10" height="10" viewBox="0 0 10 10"><circle cx="5" cy="5" r="3.1" fill="#0000ff"/></svg>
<div class="n" style="left:2533.0px;top:998.7px;width:282.0px;height:176.0px"><div style="position:absolute;left:0.00px;top:0.00px;width:7.00px;height:176.00px;box-sizing:border-box;background:#3b74cc;"></div><div style="position:absolute;top:13.70px;font-size:13px;line-height:13px;color:#222;white-space:nowrap;left:141.00px;transform:translateX(-50%);">API Request</div><div style="position:absolute;top:49.30px;font-size:15px;line-height:15px;color:#666;white-space:nowrap;left:10.40px;">Collection</div><div class="sel" style="left:87px;top:38.4px;width:184.4px;height:37.2px"></div><div style="position:absolute;top:49.30px;font-size:15px;line-height:15px;color:#222;white-space:nowrap;left:170.60px;transform:translateX(-50%);">API flows demo</div><svg style="position:absolute;left:249.4px;top:55.1px" width="9.4" height="4.8" viewBox="0 0 10 5"><path d="M0 0H10L5 5Z" fill="#6b6b6b"/></svg><div style="position:absolute;top:96.10px;font-size:15px;line-height:15px;color:#666;white-space:nowrap;left:10.40px;">Request</div><div class="sel" style="left:76.3px;top:85.2px;width:195.1px;height:37px"></div><div style="position:absolute;top:96.10px;font-size:15px;line-height:15px;color:#222;white-space:nowrap;left:165.50px;transform:translateX(-50%);">posts</div><svg style="position:absolute;left:249.4px;top:101.7px" width="9.4" height="4.8" viewBox="0 0 10 5"><path d="M0 0H10L5 5Z" fill="#6b6b6b"/></svg><div style="position:absolute;top:142.40px;font-size:13px;line-height:13px;color:#3b74cc;white-space:nowrap;left:141.00px;transform:translateX(-50%);letter-spacing:0.3px;">Flow Variables</div></div><svg style="position:absolute;left:2529.3px;top:1081.9px" width="10" height="10" viewBox="0 0 10 10"><circle cx="5" cy="5" r="3.4" fill="#e8281c" stroke="#fff" stroke-width="0.7"/></svg><svg style="position:absolute;left:2809.2px;top:1081.9px" width="10" height="10" viewBox="0 0 10 10"><circle cx="5" cy="5" r="3.1" fill="#0000ff"/></svg>
<div class="n" style="left:1225.5px;top:918.5px;width:282.0px;height:176.0px"><div style="position:absolute;left:0.00px;top:0.00px;width:7.00px;height:176.00px;box-sizing:border-box;background:#3b74cc;"></div><div style="position:absolute;top:13.70px;font-size:13px;line-height:13px;color:#222;white-space:nowrap;left:141.00px;transform:translateX(-50%);">API Request</div><div style="position:absolute;top:49.30px;font-size:15px;line-height:15px;color:#666;white-space:nowrap;left:10.40px;">Collection</div><div class="sel" style="left:87px;top:38.4px;width:184.4px;height:37.2px"></div><div style="position:absolute;top:49.30px;font-size:15px;line-height:15px;color:#222;white-space:nowrap;left:170.60px;transform:translateX(-50%);">API flows demo</div><svg style="position:absolute;left:249.4px;top:55.1px" width="9.4" height="4.8" viewBox="0 0 10 5"><path d="M0 0H10L5 5Z" fill="#6b6b6b"/></svg><div style="position:absolute;top:96.10px;font-size:15px;line-height:15px;color:#666;white-space:nowrap;left:10.40px;">Request</div><div class="sel" style="left:76.3px;top:85.2px;width:195.1px;height:37px"></div><div style="position:absolute;top:96.10px;font-size:15px;line-height:15px;color:#222;white-space:nowrap;left:165.50px;transform:translateX(-50%);">albums</div><svg style="position:absolute;left:249.4px;top:101.7px" width="9.4" height="4.8" viewBox="0 0 10 5"><path d="M0 0H10L5 5Z" fill="#6b6b6b"/></svg><div style="position:absolute;top:142.40px;font-size:13px;line-height:13px;color:#3b74cc;white-space:nowrap;left:141.00px;transform:translateX(-50%);letter-spacing:0.3px;">Flow Variables</div></div><svg style="position:absolute;left:1221.8px;top:1001.7px" width="10" height="10" viewBox="0 0 10 10"><circle cx="5" cy="5" r="3.4" fill="#e8281c" stroke="#fff" stroke-width="0.7"/></svg><svg style="position:absolute;left:1501.7px;top:1001.7px" width="10" height="10" viewBox="0 0 10 10"><circle cx="5" cy="5" r="3.1" fill="#0000ff"/></svg>
<div class="n" style="left:1696.0px;top:303.7px;width:262.0px;height:123.2px"><div style="position:absolute;left:0.00px;top:0.00px;width:262.00px;height:6.50px;box-sizing:border-box;background:#8b2fa8;"></div><div style="position:absolute;top:13.00px;font-size:13px;line-height:13px;color:#222;white-space:nowrap;left:131.00px;transform:translateX(-50%);">For</div><div style="position:absolute;top:46.70px;font-size:15px;line-height:15px;color:#666;white-space:nowrap;left:15.20px;">Variable</div><div class="inp" style="left:78.9px;top:38.3px;width:170px;height:31px"></div><div style="position:absolute;left:82.6px;top:43.8px;width:7.6px;height:20px;box-sizing:border-box;border:1px solid #c9c9c9;border-radius:2px"></div><div style="position:absolute;left:163.4px;top:43.8px;width:7.6px;height:20px;box-sizing:border-box;border:1px solid #c9c9c9;border-radius:2px"></div><div style="position:absolute;top:50.07px;font-size:11px;line-height:11px;color:#e5302a;white-space:nowrap;font-family:'Liberation Mono',monospace;left:85.00px;font-style:italic;">{{userArray}}</div><div style="position:absolute;top:89.60px;font-size:13px;line-height:13px;color:#3b74cc;white-space:nowrap;left:131.00px;transform:translateX(-50%);letter-spacing:0.3px;">Flow Variables</div></div><svg style="position:absolute;left:1692.5px;top:360.1px" width="10" height="10" viewBox="0 0 10 10"><circle cx="5" cy="5" r="3.4" fill="#e8281c" stroke="#fff" stroke-width="0.7"/></svg><svg style="position:absolute;left:1951.8px;top:360.1px" width="10" height="10" viewBox="0 0 10 10"><circle cx="5" cy="5" r="3.1" fill="#0000ff"/></svg>
<div class="n" style="left:2065.0px;top:488.0px;width:422.0px;height:101.0px"><div style="position:absolute;left:0.00px;top:0.00px;width:422.00px;height:6.30px;box-sizing:border-box;background:#8b2fa8;"></div><div style="position:absolute;top:13.00px;font-size:13px;line-height:13px;color:#222;white-space:nowrap;left:193.90px;transform:translateX(-50%);">If Condition</div><div style="position:absolute;top:32.20px;font-size:15px;line-height:15px;color:#666;white-space:nowrap;left:66.80px;transform:translateX(-50%);">Variable</div><div style="position:absolute;top:32.20px;font-size:15px;line-height:15px;color:#666;white-space:nowrap;left:193.90px;transform:translateX(-50%);">Operator</div><div style="position:absolute;top:32.20px;font-size:15px;line-height:15px;color:#666;white-space:nowrap;left:322.00px;transform:translateX(-50%);">Value</div><div class="inp" style="left:10.4px;top:59.3px;width:114px;height:30.4px"></div><div style="position:absolute;left:13.9px;top:65.0px;width:7.6px;height:20px;box-sizing:border-box;border:1px solid #c9c9c9;border-radius:2px"></div><div style="position:absolute;left:67.2px;top:65.0px;width:7.6px;height:20px;box-sizing:border-box;border:1px solid #c9c9c9;border-radius:2px"></div><div style="position:absolute;top:70.87px;font-size:11px;line-height:11px;color:#e5302a;white-space:nowrap;font-family:'Liberation Mono',monospace;left:16.30px;font-style:italic;">{{index}}</div><div class="sel" style="left:132.3px;top:59.3px;width:123.4px;height:30.4px"></div><div style="position:absolute;top:66.90px;font-size:15px;line-height:15px;color:#222;white-space:nowrap;left:185.50px;transform:translateX(-50%);">isEqualTo</div><svg style="position:absolute;left:234.0px;top:72.7px" width="9.4" height="4.8" viewBox="0 0 10 5"><path d="M0 0H10L5 5Z" fill="#6b6b6b"/></svg><div class="inp" style="left:265.4px;top:59.3px;width:114.2px;height:30.4px"></div><div style="position:absolute;top:68.20px;font-size:13px;line-height:13px;color:#222;white-space:nowrap;left:270.40px;">2</div><div style="position:absolute;top:22.09px;font-size:11px;line-height:11px;color:#333;white-space:nowrap;left:409.10px;transform:translateX(-100%);">true</div><div style="position:absolute;top:60.59px;font-size:11px;line-height:11px;color:#333;white-space:nowrap;left:410.90px;transform:translateX(-100%);">false</div></div><svg style="position:absolute;left:2061.1px;top:533.0px" width="10" height="10" viewBox="0 0 10 10"><circle cx="5" cy="5" r="3.4" fill="#e8281c" stroke="#fff" stroke-width="0.7"/></svg><svg style="position:absolute;left:2480.7px;top:516.4px" width="10" height="10" viewBox="0 0 10 10"><circle cx="5" cy="5" r="3.1" fill="#2e7d1e"/></svg><svg style="position:absolute;left:2480.7px;top:554.0px" width="10" height="10" viewBox="0 0 10 10"><circle cx="5" cy="5" r="3.1" fill="#0000ff"/></svg>
<div class="n" style="left:1694.0px;top:700.2px;width:282.0px;height:122.5px"><div style="position:absolute;left:0.00px;top:0.00px;width:282.00px;height:6.80px;box-sizing:border-box;background:#8b2fa8;"></div><div style="position:absolute;top:13.80px;font-size:13px;line-height:13px;color:#222;white-space:nowrap;left:141.00px;transform:translateX(-50%);">Repeat</div><div style="position:absolute;top:46.00px;font-size:15px;line-height:15px;color:#666;white-space:nowrap;left:10.50px;">Count Vari&#8230;</div><div class="inp" style="left:108.4px;top:38.2px;width:164.4px;height:30.8px"></div><div style="position:absolute;left:112.0px;top:43.6px;width:7.6px;height:20px;box-sizing:border-box;border:1px solid #c9c9c9;border-radius:2px"></div><div style="position:absolute;left:206.3px;top:43.6px;width:7.6px;height:20px;box-sizing:border-box;border:1px solid #c9c9c9;border-radius:2px"></div><div style="position:absolute;top:50.27px;font-size:11px;line-height:11px;color:#e5302a;white-space:nowrap;font-family:'Liberation Mono',monospace;left:114.60px;font-style:italic;">{{repeatCount}}</div><div style="position:absolute;top:88.70px;font-size:13px;line-height:13px;color:#3b74cc;white-space:nowrap;left:141.00px;transform:translateX(-50%);letter-spacing:0.3px;">Flow Variables</div></div><svg style="position:absolute;left:1689.9px;top:756.8px" width="10" height="10" viewBox="0 0 10 10"><circle cx="5" cy="5" r="3.4" fill="#e8281c" stroke="#fff" stroke-width="0.7"/></svg><svg style="position:absolute;left:1969.6px;top:756.8px" width="10" height="10" viewBox="0 0 10 10"><circle cx="5" cy="5" r="3.1" fill="#0000ff"/></svg>
<div style="position:absolute;left:1678.1px;top:1026.8px;width:490.1px;height:313.2px;box-sizing:border-box;border:1px solid #cfcfcf;background:#fff">
<div style="position:absolute;top:3.30px;font-size:15px;line-height:15px;color:#333;white-space:nowrap;left:244.85px;transform:translateX(-50%);">Script</div>
<div style="position:absolute;left:1.5px;top:26.6px;width:486.6px;height:284.4px;background:#fff;overflow:hidden;font-family:'Liberation Mono',monospace;font-size:13px;">
<div style="position:absolute;left:0;top:0;width:46.2px;height:284.4px;background:#e8e8e8"></div>
<div style="position:absolute;left:0;top:229.84px;width:46.2px;height:17.68px;background:#dadada"></div>
<div style="position:absolute;left:46.2px;top:229.84px;width:440.40000000000003px;height:17.68px;background:#ebebeb"></div>
<div style="position:absolute;left:0;top:1.50px;width:34.2px;height:17.68px;line-height:17.68px;text-align:right;color:#333">1</div>
<div style="position:absolute;left:49.4px;top:1.50px;height:17.68px;line-height:17.68px;white-space:pre;color:#111"><span style="color:#c22fb0">let</span> albums <span style="color:#c22fb0">=</span> hc.getFlowVariable(<span style="color:#a5281f">'albums'</span>);</div>
<div style="position:absolute;left:0;top:19.18px;width:34.2px;height:17.68px;line-height:17.68px;text-align:right;color:#333">2</div>
<div style="position:absolute;left:49.4px;top:19.18px;height:17.68px;line-height:17.68px;white-space:pre;color:#111"><span style="color:#4c9a2a">// Ensure albums is an array</span></div>
<div style="position:absolute;left:0;top:36.86px;width:34.2px;height:17.68px;line-height:17.68px;text-align:right;color:#333">3</div>
<div style="position:absolute;left:49.4px;top:36.86px;height:17.68px;line-height:17.68px;white-space:pre;color:#111">albums <span style="color:#c22fb0">=</span> <span style="color:#c22fb0">JSON</span>.<span style="color:#6a1fa8">parse</span>(albums)</div>
<div style="position:absolute;left:0;top:54.54px;width:34.2px;height:17.68px;line-height:17.68px;text-align:right;color:#333">4</div>
<div style="position:absolute;left:49.4px;top:54.54px;height:17.68px;line-height:17.68px;white-space:pre;color:#111"><span style="color:#c22fb0">if</span> (<span style="color:#c22fb0">Array</span>.isArray(albums)) {</div>
<div style="position:absolute;left:0;top:72.22px;width:34.2px;height:17.68px;line-height:17.68px;text-align:right;color:#333">5</div>
<div style="position:absolute;left:49.4px;top:72.22px;height:17.68px;line-height:17.68px;white-space:pre;color:#111">    <span style="color:#4c9a2a">// Sort so that albums with even userId come first</span></div>
<div style="position:absolute;left:0;top:89.90px;width:34.2px;height:17.68px;line-height:17.68px;text-align:right;color:#333">6</div>
<div style="position:absolute;left:49.4px;top:89.90px;height:17.68px;line-height:17.68px;white-space:pre;color:#111">    albums.<span style="color:#6a1fa8">sort</span>((<span style="color:#3d6db5">a</span>, <span style="color:#3d6db5">b</span>) <span style="color:#c22fb0">=&gt;</span> {</div>
<div style="position:absolute;left:0;top:107.58px;width:34.2px;height:17.68px;line-height:17.68px;text-align:right;color:#333">7</div>
<div style="position:absolute;left:49.4px;top:107.58px;height:17.68px;line-height:17.68px;white-space:pre;color:#111">        <span style="color:#c22fb0">const</span> aEven <span style="color:#c22fb0">=</span> a.id <span style="color:#c22fb0">%</span> <span style="color:#2f8f5b">2</span> <span style="color:#c22fb0">===</span> <span style="color:#2f8f5b">0</span> ? <span style="color:#2f8f5b">0</span> : <span style="color:#2f8f5b">1</span>;</div>
<div style="position:absolute;left:0;top:125.26px;width:34.2px;height:17.68px;line-height:17.68px;text-align:right;color:#333">8</div>
<div style="position:absolute;left:49.4px;top:125.26px;height:17.68px;line-height:17.68px;white-space:pre;color:#111">        <span style="color:#c22fb0">const</span> bEven <span style="color:#c22fb0">=</span> b.id <span style="color:#c22fb0">%</span> <span style="color:#2f8f5b">2</span> <span style="color:#c22fb0">===</span> <span style="color:#2f8f5b">0</span> ? <span style="color:#2f8f5b">0</span> : <span style="color:#2f8f5b">1</span>;</div>
<div style="position:absolute;left:0;top:142.94px;width:34.2px;height:17.68px;line-height:17.68px;text-align:right;color:#333">9</div>
<div style="position:absolute;left:49.4px;top:142.94px;height:17.68px;line-height:17.68px;white-space:pre;color:#111">        <span style="color:#c22fb0">return</span> aEven <span style="color:#c22fb0">-</span> bEven;</div>
<div style="position:absolute;left:0;top:160.62px;width:34.2px;height:17.68px;line-height:17.68px;text-align:right;color:#333">10</div>
<div style="position:absolute;left:49.4px;top:160.62px;height:17.68px;line-height:17.68px;white-space:pre;color:#111">    });</div>
<div style="position:absolute;left:0;top:178.30px;width:34.2px;height:17.68px;line-height:17.68px;text-align:right;color:#333">11</div>
<div style="position:absolute;left:49.4px;top:178.30px;height:17.68px;line-height:17.68px;white-space:pre;color:#111">}</div>
<div style="position:absolute;left:0;top:195.98px;width:34.2px;height:17.68px;line-height:17.68px;text-align:right;color:#333">12</div>
<div style="position:absolute;left:49.4px;top:195.98px;height:17.68px;line-height:17.68px;white-space:pre;color:#111">hc.setFlowVariable(<span style="color:#a5281f">'albums'</span>, albums)</div>
<div style="position:absolute;left:0;top:213.66px;width:34.2px;height:17.68px;line-height:17.68px;text-align:right;color:#333">13</div>
<div style="position:absolute;left:49.4px;top:213.66px;height:17.68px;line-height:17.68px;white-space:pre;color:#111"><span style="color:#c22fb0">console</span>.<span style="color:#6a1fa8">log</span>(<span style="color:#a5281f">"albums"</span>, albums)</div>
<div style="position:absolute;left:0;top:231.34px;width:34.2px;height:17.68px;line-height:17.68px;text-align:right;color:#333">14</div>
<div style="position:absolute;left:49.4px;top:231.34px;height:17.68px;line-height:17.68px;white-space:pre;color:#111"></div>
<svg style="position:absolute;left:37.5px;top:60.0px" width="5.5" height="3" viewBox="0 0 6 3"><path d="M0 0H6L3 3Z" fill="#777"/></svg>
<svg style="position:absolute;left:37.5px;top:95.4px" width="5.5" height="3" viewBox="0 0 6 3"><path d="M0 0H6L3 3Z" fill="#777"/></svg>
<div style="position:absolute;left:80.6px;top:106.1px;width:0;height:53.0px;border-left:1px dotted #c8c8c8"></div>
<div style="position:absolute;left:50.3px;top:230.3px;width:1.4px;height:16.7px;background:#8a8a8a"></div>
</div></div>
<svg style="position:absolute;left:0;top:0" width="2980" height="1593"><circle cx="1678.6" cy="1027.3" r="5.6" fill="#3b74cc"/><circle cx="2167.0" cy="1027.3" r="5.6" fill="#3b74cc"/><circle cx="1678.6" cy="1339.3" r="5.6" fill="#3b74cc"/><circle cx="2167.0" cy="1339.3" r="5.6" fill="#3b74cc"/></svg>
<svg style="position:absolute;left:1673.6px;top:1178.0px" width="10" height="10" viewBox="0 0 10 10"><circle cx="5" cy="5" r="3.4" fill="#e8281c" stroke="#fff" stroke-width="0.7"/></svg><svg style="position:absolute;left:2161.8px;top:1178.0px" width="10" height="10" viewBox="0 0 10 10"><circle cx="5" cy="5" r="3.1" fill="#0000ff"/></svg>
<div style="position:absolute;left:2825px;top:270px;width:140px;height:73px;border-radius:9px;background:#3b74cc;box-shadow:0 6px 2px -4px rgba(0,0,0,.2),0 4px 4px 0 rgba(0,0,0,.14),0 2px 10px 0 rgba(0,0,0,.12)"></div>
<div style="position:absolute;top:291.75px;font-size:29px;line-height:29px;color:#fff;white-space:nowrap;display:flex;justify-content:center;left:2895px;width:0;">SAVE</div>
<div style="position:absolute;left:2555.00px;top:1208.00px;width:400.00px;height:300.00px;box-sizing:border-box;background:#f6f6f6;"></div>
<div style="position:absolute;left:2630.60px;top:1349.50px;width:195.80px;height:108.20px;box-sizing:border-box;background:#fff;"></div>
<div style="position:absolute;left:2683.96px;top:1217.19px;width:42.89px;height:27.29px;box-sizing:border-box;background:#ebebeb;"></div>
<div style="position:absolute;left:2737.05px;top:1239.09px;width:21.90px;height:9.60px;box-sizing:border-box;background:#ebebeb;"></div>
<div style="position:absolute;left:2651.87px;top:1242.99px;width:24.00px;height:14.70px;box-sizing:border-box;background:#ebebeb;"></div>
<div style="position:absolute;left:2767.94px;top:1248.09px;width:24.00px;height:14.70px;box-sizing:border-box;background:#ebebeb;"></div>
<div style="position:absolute;left:2896.02px;top:1230.99px;width:22.80px;height:14.70px;box-sizing:border-box;background:#ebebeb;"></div>
<div style="position:absolute;left:2575.98px;top:1256.18px;width:22.80px;height:15.60px;box-sizing:border-box;background:#ebebeb;"></div>
<div style="position:absolute;left:2620.97px;top:1257.98px;width:24.00px;height:18.90px;box-sizing:border-box;background:#ebebeb;"></div>
<div style="position:absolute;left:2692.06px;top:1272.08px;width:22.80px;height:9.60px;box-sizing:border-box;background:#ebebeb;"></div>
<div style="position:absolute;left:2623.97px;top:1317.97px;width:24.00px;height:18.90px;box-sizing:border-box;background:#ebebeb;"></div>
<div style="position:absolute;left:2659.06px;top:1323.97px;width:21.90px;height:9.90px;box-sizing:border-box;background:#ebebeb;"></div>
<div style="position:absolute;left:2687.86px;top:1326.07px;width:24.00px;height:14.70px;box-sizing:border-box;background:#ebebeb;"></div>
<div style="position:absolute;left:2728.05px;top:1318.87px;width:24.00px;height:15.00px;box-sizing:border-box;background:#ebebeb;"></div>
<div style="position:absolute;left:2911.01px;top:1383.96px;width:22.80px;height:15.00px;box-sizing:border-box;background:#ebebeb;"></div>
<div style="position:absolute;left:2749.95px;top:1468.84px;width:35.09px;height:8.10px;box-sizing:border-box;background:#ebebeb;"></div>
<div style="position:absolute;left:2807.83px;top:1467.04px;width:22.20px;height:10.80px;box-sizing:border-box;background:#ebebeb;"></div>
<div style="position:absolute;left:2728.95px;top:1483.84px;width:24.00px;height:14.70px;box-sizing:border-box;background:#ebebeb;"></div>
<div style="position:absolute;left:2717.85px;top:1353.97px;width:22.20px;height:9.90px;box-sizing:border-box;background:#e2e2e2;"></div>
<div style="position:absolute;left:2674.96px;top:1362.06px;width:24.00px;height:14.70px;box-sizing:border-box;background:#e2e2e2;"></div>
<div style="position:absolute;left:2749.05px;top:1368.96px;width:35.99px;height:9.00px;box-sizing:border-box;background:#e2e2e2;"></div>
<div style="position:absolute;left:2794.94px;top:1359.06px;width:24.00px;height:14.70px;box-sizing:border-box;background:#e2e2e2;"></div>
<div style="position:absolute;left:2633.87px;top:1372.86px;width:24.00px;height:18.90px;box-sizing:border-box;background:#e2e2e2;"></div>
<div style="position:absolute;left:2717.85px;top:1386.96px;width:24.00px;height:10.80px;box-sizing:border-box;background:#e2e2e2;"></div>
<div style="position:absolute;left:2762.84px;top:1390.86px;width:24.00px;height:13.80px;box-sizing:border-box;background:#e2e2e2;"></div>
<div style="position:absolute;left:2678.86px;top:1405.85px;width:23.10px;height:14.10px;box-sizing:border-box;background:#e2e2e2;"></div>
<div style="position:absolute;left:2716.95px;top:1414.85px;width:41.09px;height:26.09px;box-sizing:border-box;background:#e2e2e2;"></div>
<div style="position:absolute;left:2788.94px;top:1411.85px;width:23.10px;height:15.00px;box-sizing:border-box;background:#e2e2e2;"></div>
<div style="position:absolute;left:1485.00px;top:1414.00px;width:208.00px;height:53.60px;box-sizing:border-box;background:#fefefe;box-shadow:0 1px 4px 1px rgba(0,0,0,.09);"></div>
<svg style="position:absolute;left:1499.6px;top:1427.9px" width="23.6" height="23.8" viewBox="0 0 32 32" preserveAspectRatio="none"><path d="M32 18.133H18.133V32h-4.266V18.133H0v-4.266h13.867V0h4.266v13.867H32z"/></svg>
<svg style="position:absolute;left:1551px;top:1438.3px" width="24.5" height="3.8" viewBox="0 0 32 5"><path d="M0 0h32v4.2H0z"/></svg>
<svg style="position:absolute;left:1603.5px;top:1429px" width="23.5" height="22" viewBox="0 0 32 30"><path d="M3.692 4.63c0-.53.4-.938.939-.938h5.215V0H4.708C2.13 0 0 2.054 0 4.63v5.216h3.692V4.631zM27.354 0h-5.2v3.692h5.17c.53 0 .984.4.984.939v5.215H32V4.631A4.624 4.624 0 0027.354 0zm.954 24.83c0 .532-.4.94-.939.94h-5.215v3.768h5.215c2.577 0 4.631-2.13 4.631-4.707v-5.139h-3.692v5.139zm-23.677.94c-.531 0-.939-.4-.939-.94v-5.138H0v5.139c0 2.577 2.13 4.707 4.708 4.707h5.138V25.77H4.631z"/></svg>
<svg style="position:absolute;left:1658px;top:1428.2px" width="18.4" height="23.6" viewBox="0 0 25 32"><path d="M21.333 10.667H19.81V7.619C19.81 3.429 16.38 0 12.19 0c-4.114 1.828-1.37 2.133.305 2.438 1.676.305 4.42 2.59 4.42 5.181v3.048H3.047A3.056 3.056 0 000 13.714v15.238A3.056 3.056 0 003.048 32h18.285a3.056 3.056 0 003.048-3.048V13.714a3.056 3.056 0 00-3.048-3.047zM12.19 24.533a3.056 3.056 0 01-3.047-3.047 3.056 3.056 0 013.047-3.048 3.056 3.056 0 013.048 3.048 3.056 3.056 0 01-3.048 3.047z"/></svg>
<div style="position:absolute;left:1733px;top:1385.7px;width:112px;height:112px;border-radius:50%;background:#3b74cc;box-shadow:0 6px 10px -2px rgba(0,0,0,.2),0 12px 20px 0 rgba(0,0,0,.14),0 2px 36px 0 rgba(0,0,0,.12)"></div>
<svg style="position:absolute;left:1765.00px;top:1417.70px;" width="48" height="48" viewBox="0 0 24 24"><path fill="#fff" d="M19 13h-6v6h-2v-6H5v-2h6V5h2v6h6v2z"/></svg>
<svg style="position:absolute;left:1861.00px;top:1410.00px;" width="48" height="48" viewBox="0 0 24 24"><path fill="rgba(60,60,60,.72)" d="M12 2C6.48 2 2 6.48 2 12s4.48 10 10 10 10-4.48 10-10S17.52 2 12 2zm1 15h-2v-6h2v6zm0-8h-2V7h2v2z"/></svg>
</div></div>
<div style="position:absolute;left:0.00px;top:1540.00px;width:2980.00px;height:53.00px;box-sizing:border-box;background:#333;"></div>
<div style="position:absolute;top:1557.43px;font-size:24.3px;line-height:24.3px;color:#fff;white-space:nowrap;left:1487.00px;transform:translateX(-50%);">Welcome to HawkClient</div>
</div></body></html>
